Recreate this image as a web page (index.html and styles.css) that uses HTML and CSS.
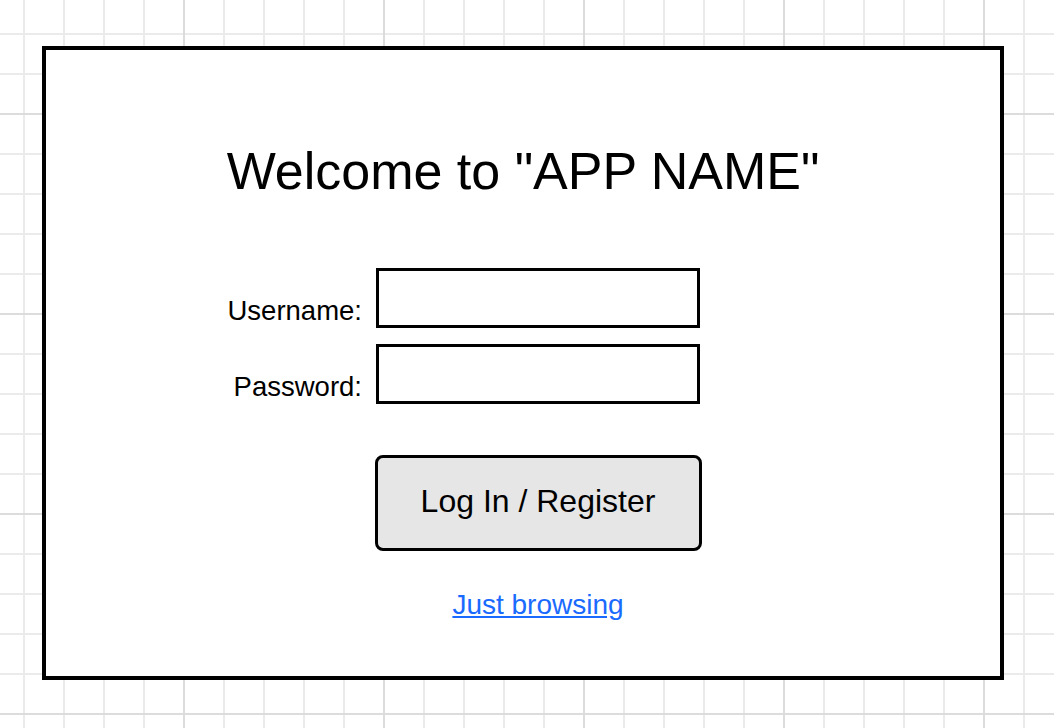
FILE: index.html
```html
<!DOCTYPE html>
<html lang="en">
<head>
<meta charset="utf-8">
<title>Welcome</title>
<link rel="stylesheet" href="styles.css">
</head>
<body>
  <div class="frame">
    <h1 class="title">Welcome to "APP NAME"</h1>
    <form class="form">
      <label class="label" for="u">Username:</label>
      <input id="u" class="field" type="text">
      <label class="label" for="p">Password:</label>
      <input id="p" class="field" type="password">
      <button class="btn" type="button">Log In / Register</button>
      <a class="link" href="#">Just browsing</a>
    </form>
  </div>
</body>
</html>
```

FILE: styles.css
```css
html {
  background-color: #fff;
  background-image:
    linear-gradient(to right, #dcdcdc 2px, transparent 2px),
    linear-gradient(to bottom, #dcdcdc 2px, transparent 2px),
    linear-gradient(to right, #ebebeb 2px, transparent 2px),
    linear-gradient(to bottom, #ebebeb 2px, transparent 2px);
  background-size: 200px 100%, 100% 200px, 40px 100%, 100% 40px;
  background-position: 183px 0, 0 113px, 23px 0, 0 33px;
  height: 100%;
}

body {
  margin: 0;
  padding: 46px 0 0 42px;
  font-family: "Liberation Sans", Arial, Helvetica, sans-serif;
  color: #000;
}

.frame {
  box-sizing: border-box;
  width: 962px;
  height: 634px;
  border: 4px solid #000;
  background: #fff;
  display: flex;
  flex-direction: column;
}

.title {
  margin: 0;
  padding-top: 91px;
  font-size: 52px;
  font-weight: normal;
  line-height: 60px;
  text-align: center;
}

.form {
  margin: 67px 0 0 0;
  padding-left: 30px;
  display: grid;
  grid-template-columns: 1fr 324px 1fr;
  row-gap: 16px;
}

.label {
  grid-column: 1;
  justify-self: end;
  align-self: end;
  padding-right: 14px;
  padding-bottom: 2px;
  font-size: 27.5px;
  line-height: 31px;
}

.field {
  grid-column: 2;
  box-sizing: border-box;
  width: 324px;
  height: 60px;
  margin: 0;
  border: 3px solid #000;
  border-radius: 0;
  background: #fff;
  outline: none;
}

.btn {
  grid-column: 2;
  justify-self: center;
  box-sizing: border-box;
  width: 327px;
  height: 96px;
  margin-top: 35px;
  border: 3px solid #000;
  border-radius: 8px;
  background: #e6e6e6;
  color: #000;
  font-family: "Liberation Sans", Arial, Helvetica, sans-serif;
  font-size: 32px;
  padding: 0 0 4px 0;
}

.link {
  grid-column: 2;
  justify-self: center;
  margin-top: 22px;
  font-size: 28px;
  line-height: 32px;
  color: #1a6aff;
  text-decoration: underline;
}
```
